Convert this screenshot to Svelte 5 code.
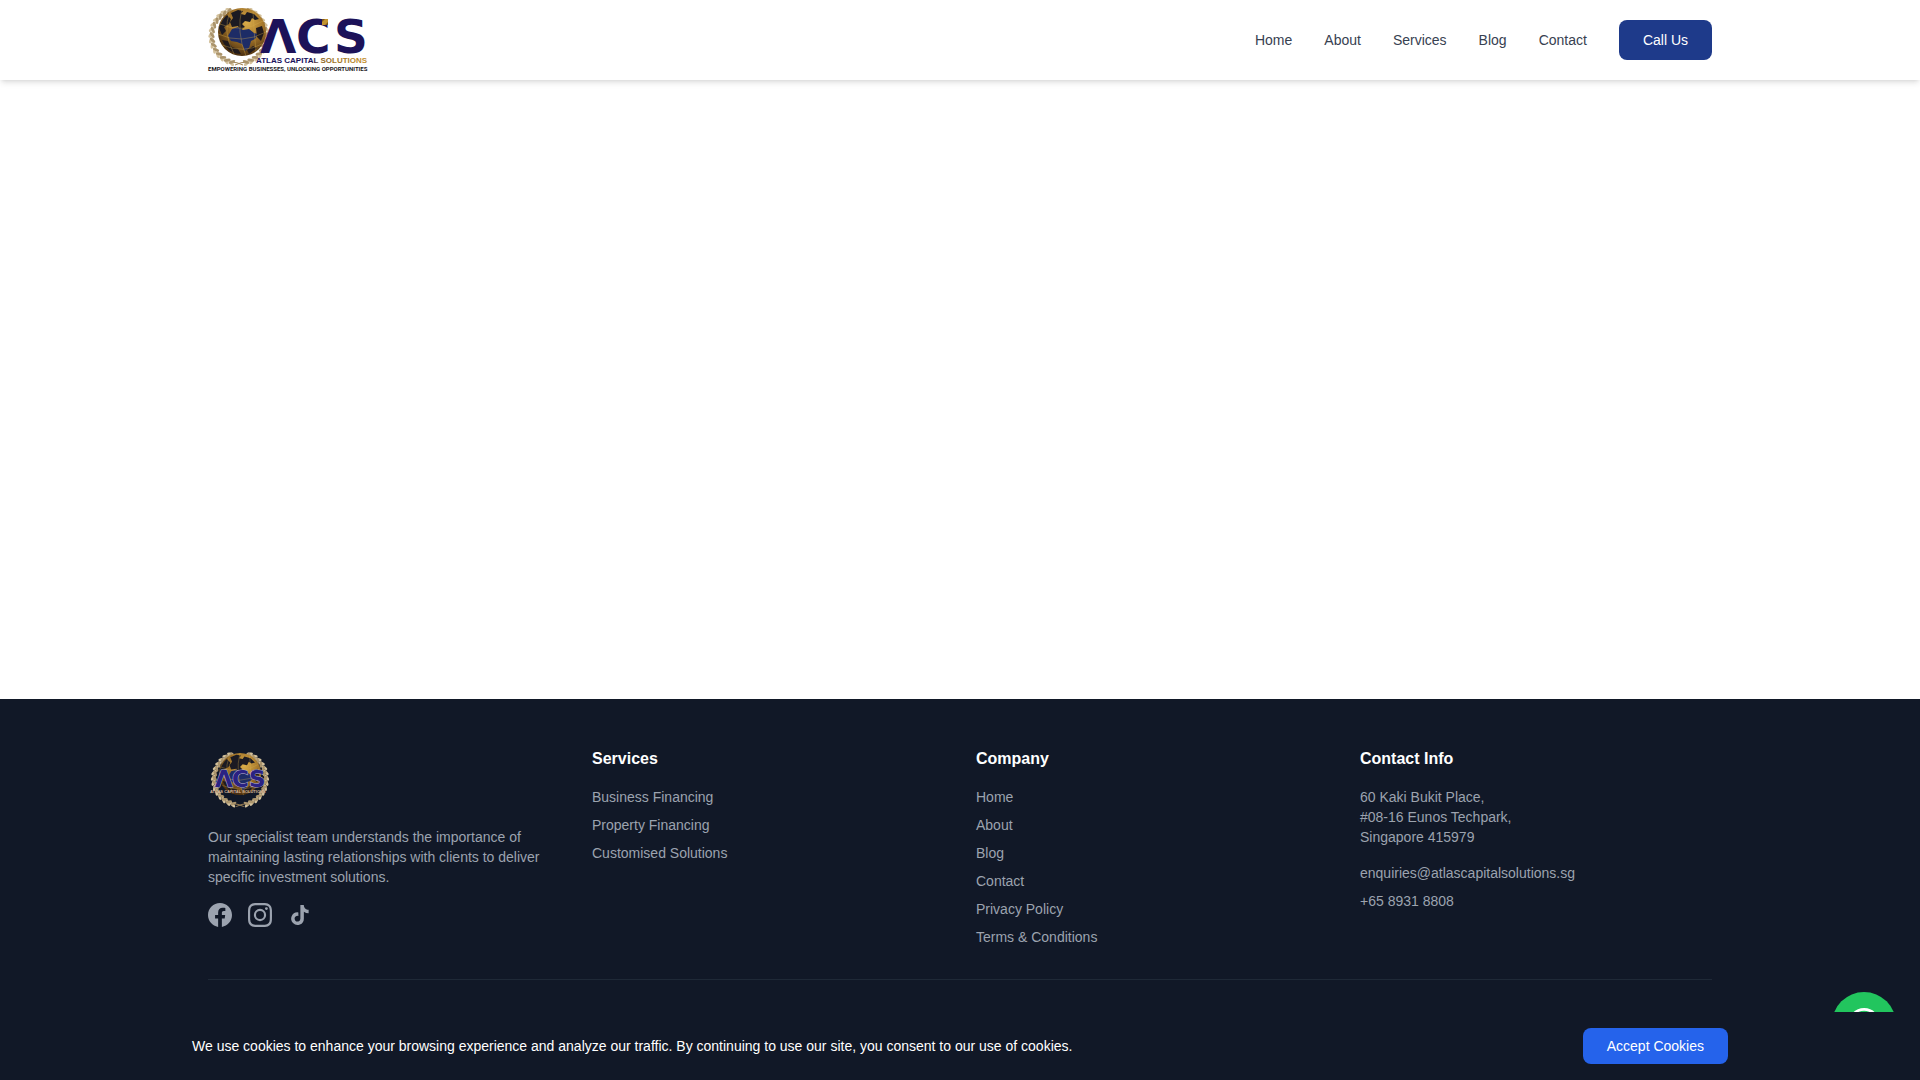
<script lang="ts">
  const navLinks = ['Home', 'About', 'Services', 'Blog', 'Contact'];
  const services = ['Business Financing', 'Property Financing', 'Customised Solutions'];
  const company = ['Home', 'About', 'Blog', 'Contact', 'Privacy Policy', 'Terms & Conditions'];

  // angles of the laurel leaves, one branch, measured from the bottom
  const leaves = Array.from({ length: 14 }, (_, i) => 12 + i * 11);

  let showCookies = $state(true);
</script>

{#snippet laurel()}
  {#each [1, -1] as side}
    <g transform="scale({side} 1)">
      <path d="M4 29Q-2 26-8 26A27 27 0 0 1-13-23" fill="none" stroke="#a08456" />
      {#each leaves as angle}
        <g transform="rotate({angle}) translate(0 27)">
          <ellipse rx="3.6" ry="1.6" cx="-1" cy="2" transform="rotate(35)" fill="#d3c19c" />
          <ellipse rx="3.4" ry="1.4" cx="-1" cy="-1" transform="rotate(-35)" fill="#ab946c" />
        </g>
      {/each}
    </g>
  {/each}
{/snippet}

{#snippet globe()}
  <circle r="24" fill="url(#gold)" />
  <path
    d="M-23-4q3-9 8-13l4 4-2 5-5 3 2 4-4 4zM-11-19l7-3 5 1-2 3 4 1 2-3 7 2 5 5-4 1-3-2-2 4-5-1-3 3 3 3-5 3-2-4-6 1-2-5 3-4z"
    fill="#1b1a22"
  />
  <path d="M-10-3l6-2 5 3 6-1 5 4 4 1-3 5-4 2-2 7-4 3-3-7-5-2-6-1-3-5z" fill="#1d2c66" />
  <path d="M-20 8l6 1 4 6 6 2 3 5q-13 0-19-14zM14-4l6-2 2 7-3 8-4-4zM5 18l6-4 4 2-8 6z" fill="#211a1c" />
  <path
    d="M-22-8Q0 2 21-11M-24 2Q0 13 24 0M-20 13Q2 22 20 12M-12-21Q-20 0-8 22M0-24Q-6 0 4 24M11-21Q12 2 14 19"
    fill="none"
    stroke="#d9ae4c"
    stroke-width=".6"
    opacity=".6"
  />
{/snippet}

<div class="page">
  <header>
    <div class="container bar">
      <a class="logo" href="#home" aria-label="Atlas Capital Solutions">
        <svg width="160" height="64" viewBox="0 0 160 64">
          <defs>
            <radialGradient id="gold" cx=".6" cy=".3" r=".7">
              <stop offset="0" stop-color="#dcae4a" />
              <stop offset=".5" stop-color="#a3752a" />
              <stop offset="1" stop-color="#4c3010" />
            </radialGradient>
            <linearGradient id="brand">
              <stop offset=".5" stop-color="#1c1259" />
              <stop offset=".58" stop-color="#8a6324" />
              <stop offset="1" stop-color="#c79335" />
            </linearGradient>
          </defs>
          <g transform="translate(31 28)">{@render laurel()}</g>
          <g transform="translate(34 24)">{@render globe()}</g>
          <text class="letters" x="52 88 126" y="45">ΛCS</text>
          <path d="M114 11h6v6h-6z" fill="#c3942f" />
          <path d="M114 11h3l-3 3zM120 17v-3l-3 3z" fill="#7a551c" />
          <text class="name" x="48" y="55" fill="url(#brand)">ATLAS CAPITAL SOLUTIONS</text>
          <text class="motto" x="0" y="63">EMPOWERING BUSINESSES, UNLOCKING OPPORTUNITIES</text>
        </svg>
      </a>
      <nav>
        {#each navLinks as link}
          <a href="#{link.toLowerCase()}">{link}</a>
        {/each}
        <a class="call" href="tel:+6589318808">Call Us</a>
      </nav>
    </div>
  </header>

  <main></main>

  <footer>
    <div class="container">
      <div class="columns">
        <div>
          <svg class="emblem" width="64" height="64" viewBox="0 0 64 64" aria-hidden="true">
            <g transform="translate(32 32) scale(.95)">{@render laurel()}</g>
            <g transform="translate(32 27) scale(.88)">{@render globe()}</g>
            <text class="small-letters" x="7 24 41" y="40">ΛCS</text>
            <text class="small-name" x="2" y="46">ATLAS CAPITAL SOLUTIONS</text>
          </svg>
          <p>
            Our specialist team understands the importance of maintaining lasting relationships with
            clients to deliver specific investment solutions.
          </p>
          <div class="social">
            <a href="#facebook" aria-label="Facebook">
              <svg viewBox="0 0 24 24">
                <path
                  d="M24 12.073c0-6.627-5.373-12-12-12s-12 5.373-12 12c0 5.99 4.388 10.954 10.125 11.854v-8.385H7.078v-3.47h3.047V9.43c0-3.007 1.792-4.669 4.533-4.669 1.312 0 2.686.235 2.686.235v2.953H15.83c-1.491 0-1.956.925-1.956 1.874v2.25h3.328l-.532 3.47h-2.796v8.385C19.612 23.027 24 18.062 24 12.073z"
                />
              </svg>
            </a>
            <a href="#instagram" aria-label="Instagram">
              <svg viewBox="0 0 24 24">
                <path
                  d="M12 2.163c3.204 0 3.584.012 4.85.07 3.252.148 4.771 1.691 4.919 4.919.058 1.265.069 1.645.069 4.849 0 3.205-.012 3.584-.069 4.849-.149 3.225-1.664 4.771-4.919 4.919-1.266.058-1.644.07-4.85.07-3.204 0-3.584-.012-4.849-.07-3.26-.149-4.771-1.699-4.919-4.92-.058-1.265-.07-1.644-.07-4.849 0-3.204.013-3.583.07-4.849.149-3.227 1.664-4.771 4.919-4.919 1.266-.057 1.645-.069 4.849-.069zM12 0C8.741 0 8.333.014 7.053.072 2.695.272.273 2.69.073 7.052.014 8.333 0 8.741 0 12c0 3.259.014 3.668.072 4.948.2 4.358 2.618 6.78 6.98 6.98C8.333 23.986 8.741 24 12 24c3.259 0 3.668-.014 4.948-.072 4.354-.2 6.782-2.618 6.979-6.98.059-1.28.073-1.689.073-4.948 0-3.259-.014-3.667-.072-4.947-.196-4.354-2.617-6.78-6.979-6.98C15.668.014 15.259 0 12 0zm0 5.838a6.162 6.162 0 100 12.324 6.162 6.162 0 000-12.324zM12 16a4 4 0 110-8 4 4 0 010 8zm6.406-11.845a1.44 1.44 0 100 2.881 1.44 1.44 0 000-2.881z"
                />
              </svg>
            </a>
            <a href="#tiktok" aria-label="TikTok">
              <svg viewBox="0 0 24 24">
                <path
                  d="M19.59 6.69a4.83 4.83 0 0 1-3.77-4.25V2h-3.45v13.67a2.89 2.89 0 0 1-5.2 1.74 2.89 2.89 0 0 1 2.31-4.64 2.93 2.93 0 0 1 .88.13V9.4a6.84 6.84 0 0 0-1-.05A6.33 6.33 0 0 0 5 20.1a6.34 6.34 0 0 0 10.86-4.43v-7a8.16 8.16 0 0 0 4.77 1.52v-3.4a4.85 4.85 0 0 1-1-.1z"
                />
              </svg>
            </a>
          </div>
        </div>

        <div>
          <h3>Services</h3>
          <ul>
            {#each services as item}
              <li><a href="#services">{item}</a></li>
            {/each}
          </ul>
        </div>

        <div>
          <h3>Company</h3>
          <ul>
            {#each company as item}
              <li><a href="#company">{item}</a></li>
            {/each}
          </ul>
        </div>

        <div>
          <h3>Contact Info</h3>
          <address>
            60 Kaki Bukit Place,<br />
            #08-16 Eunos Techpark,<br />
            Singapore 415979
          </address>
          <ul>
            <li><a href="mailto:enquiries@atlascapitalsolutions.sg">enquiries@atlascapitalsolutions.sg</a></li>
            <li><a href="tel:+6589318808">+65 8931 8808</a></li>
          </ul>
        </div>
      </div>
      <div class="bottom"></div>
    </div>
  </footer>
</div>

<a class="whatsapp" href="#whatsapp" aria-label="Chat on WhatsApp">
  <svg viewBox="0 0 24 24">
    <path
      d="M17.472 14.382c-.297-.149-1.758-.867-2.03-.967-.273-.099-.471-.148-.67.15-.197.297-.767.966-.94 1.164-.173.199-.347.223-.644.075-.297-.15-1.255-.463-2.39-1.475-.883-.788-1.48-1.761-1.653-2.059-.173-.297-.018-.458.13-.606.134-.133.298-.347.446-.52.149-.174.198-.298.298-.497.099-.198.05-.371-.025-.52-.075-.149-.669-1.612-.916-2.207-.242-.579-.487-.5-.669-.51-.173-.008-.371-.01-.57-.01-.198 0-.52.074-.792.372-.272.297-1.04 1.016-1.04 2.479 0 1.462 1.065 2.875 1.213 3.074.149.198 2.096 3.2 5.077 4.487.709.306 1.262.489 1.694.625.712.227 1.36.195 1.871.118.571-.085 1.758-.719 2.006-1.413.248-.694.248-1.289.173-1.413-.074-.124-.272-.198-.57-.347m-5.421 7.403h-.004a9.87 9.87 0 01-5.031-1.378l-.361-.214-3.741.982.998-3.648-.235-.374a9.86 9.86 0 01-1.51-5.26c.001-5.45 4.436-9.884 9.888-9.884 2.64 0 5.122 1.03 6.988 2.898a9.825 9.825 0 012.893 6.994c-.003 5.45-4.437 9.884-9.885 9.884m8.413-18.297A11.815 11.815 0 0012.05 0C5.495 0 .16 5.335.157 11.892c0 2.096.547 4.142 1.588 5.945L.057 24l6.305-1.654a11.882 11.882 0 005.683 1.448h.005c6.554 0 11.89-5.335 11.893-11.893a11.821 11.821 0 00-3.48-8.413z"
    />
  </svg>
</a>

{#if showCookies}
  <div class="cookies">
    <div class="cookies-inner">
      <p>
        We use cookies to enhance your browsing experience and analyze our traffic. By continuing to
        use our site, you consent to our use of cookies.
      </p>
      <button onclick={() => (showCookies = false)}>Accept Cookies</button>
    </div>
  </div>
{/if}

<style>
  :global(body) {
    margin: 0;
    background: #fff;
    font-family: 'Liberation Sans', Arial, sans-serif;
    font-size: 14px;
    line-height: 20px;
  }

  .page {
    min-height: 100vh;
    display: flex;
    flex-direction: column;
  }

  .container {
    max-width: 1504px;
    margin: 0 auto;
    padding: 0 16px;
  }

  a {
    color: inherit;
    text-decoration: none;
  }

  header {
    position: sticky;
    top: 0;
    background: #fff;
    color: #374151;
    box-shadow:
      0 4px 6px -1px rgba(0, 0, 0, 0.1),
      0 2px 4px -2px rgba(0, 0, 0, 0.1);
  }

  .bar {
    height: 80px;
    display: flex;
    align-items: center;
    justify-content: space-between;
  }

  .logo svg {
    display: block;
    overflow: visible;
  }

  .letters {
    font: bold 47px 'DejaVu Sans', sans-serif;
    fill: #1c1259;
  }

  .name {
    font: bold 8px 'Liberation Sans', sans-serif;
  }

  .motto {
    font: bold 6px Roboto, 'Liberation Sans', sans-serif;
    fill: #18151a;
  }

  nav {
    display: flex;
    align-items: center;
    gap: 32px;
  }

  .call {
    padding: 10px 24px;
    border-radius: 8px;
    background: #1e3a8a;
    color: #fff;
  }

  main {
    flex: 1;
  }

  footer {
    padding: 48px 0;
    background: #111827;
    color: #9ca3af;
  }

  .columns {
    display: grid;
    grid-template-columns: repeat(4, 1fr);
    gap: 32px;
  }

  .emblem {
    display: block;
    margin-bottom: 16px;
  }

  .small-letters {
    font: bold 23px 'DejaVu Sans', sans-serif;
    fill: #2a2283;
    stroke: #b9b4cc;
    stroke-width: 1px;
    paint-order: stroke;
  }

  .small-name {
    font: bold 4px 'Liberation Sans', sans-serif;
    fill: #d8b79c;
  }

  p {
    margin: 0;
  }

  .social {
    display: flex;
    gap: 16px;
    margin-top: 16px;
  }

  .social svg {
    display: block;
    width: 24px;
    height: 24px;
    fill: currentColor;
  }

  h3 {
    margin: 0 0 16px;
    color: #fff;
    font-size: 16px;
    line-height: 24px;
  }

  ul {
    margin: 0;
    padding: 0;
    list-style: none;
    display: flex;
    flex-direction: column;
    gap: 8px;
  }

  address {
    margin-bottom: 16px;
    font-style: normal;
  }

  .bottom {
    min-height: 20px;
    margin-top: 32px;
    padding-top: 32px;
    border-top: 1px solid #1f2937;
  }

  .whatsapp {
    position: fixed;
    right: 24px;
    bottom: 24px;
    padding: 16px;
    border-radius: 50%;
    background: #22c55e;
  }

  .whatsapp svg {
    display: block;
    width: 32px;
    height: 32px;
    fill: #fff;
  }

  .cookies {
    position: fixed;
    left: 0;
    right: 0;
    bottom: 0;
    padding: 16px;
    background: #111827;
    color: #fff;
  }

  .cookies-inner {
    max-width: 1536px;
    margin: 0 auto;
    display: flex;
    align-items: center;
    justify-content: space-between;
    gap: 16px;
  }

  button {
    padding: 8px 24px;
    border: 0;
    border-radius: 8px;
    background: #2563eb;
    color: #fff;
    font: inherit;
    cursor: pointer;
  }
</style>
